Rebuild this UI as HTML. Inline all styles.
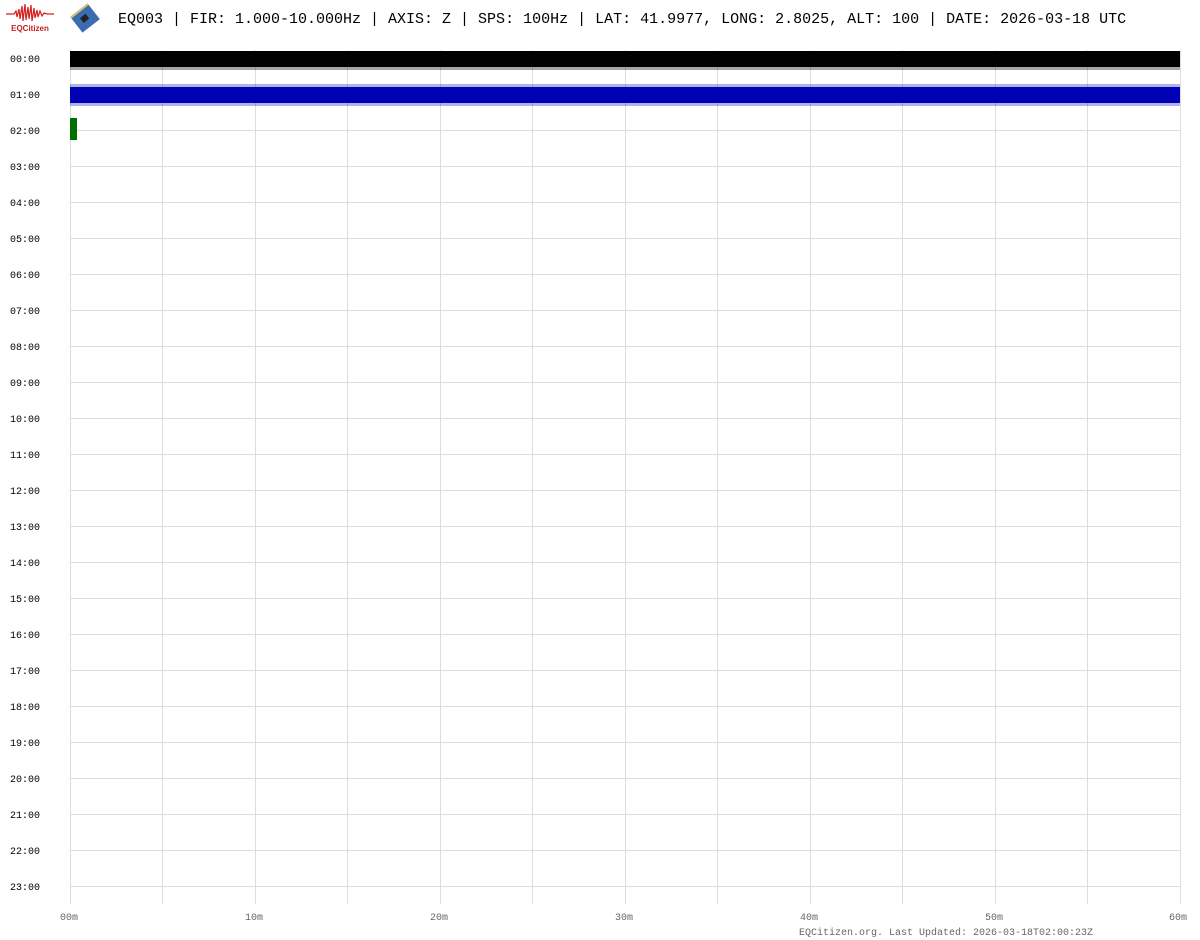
<!DOCTYPE html>
<html><head><meta charset="utf-8"><style>
body{margin:0;width:1200px;height:940px;background:#fff;overflow:hidden;font-family:"Liberation Mono",monospace;}
svg{position:absolute;left:0;top:0}
</style></head><body>
<svg width="1200" height="940" xmlns="http://www.w3.org/2000/svg">
<g stroke="#ddd" stroke-width="1">
<line x1="70.5" y1="50" x2="70.5" y2="904"/><line x1="162.5" y1="50" x2="162.5" y2="904"/><line x1="255.5" y1="50" x2="255.5" y2="904"/><line x1="347.5" y1="50" x2="347.5" y2="904"/><line x1="440.5" y1="50" x2="440.5" y2="904"/><line x1="532.5" y1="50" x2="532.5" y2="904"/><line x1="625.5" y1="50" x2="625.5" y2="904"/><line x1="717.5" y1="50" x2="717.5" y2="904"/><line x1="810.5" y1="50" x2="810.5" y2="904"/><line x1="902.5" y1="50" x2="902.5" y2="904"/><line x1="995.5" y1="50" x2="995.5" y2="904"/><line x1="1087.5" y1="50" x2="1087.5" y2="904"/><line x1="1180.5" y1="50" x2="1180.5" y2="904"/>
</g>
<g stroke="#ddd" stroke-width="1">
<line x1="70" y1="58.5" x2="1180" y2="58.5"/><line x1="70" y1="94.5" x2="1180" y2="94.5"/><line x1="70" y1="130.5" x2="1180" y2="130.5"/><line x1="70" y1="166.5" x2="1180" y2="166.5"/><line x1="70" y1="202.5" x2="1180" y2="202.5"/><line x1="70" y1="238.5" x2="1180" y2="238.5"/><line x1="70" y1="274.5" x2="1180" y2="274.5"/><line x1="70" y1="310.5" x2="1180" y2="310.5"/><line x1="70" y1="346.5" x2="1180" y2="346.5"/><line x1="70" y1="382.5" x2="1180" y2="382.5"/><line x1="70" y1="418.5" x2="1180" y2="418.5"/><line x1="70" y1="454.5" x2="1180" y2="454.5"/><line x1="70" y1="490.5" x2="1180" y2="490.5"/><line x1="70" y1="526.5" x2="1180" y2="526.5"/><line x1="70" y1="562.5" x2="1180" y2="562.5"/><line x1="70" y1="598.5" x2="1180" y2="598.5"/><line x1="70" y1="634.5" x2="1180" y2="634.5"/><line x1="70" y1="670.5" x2="1180" y2="670.5"/><line x1="70" y1="706.5" x2="1180" y2="706.5"/><line x1="70" y1="742.5" x2="1180" y2="742.5"/><line x1="70" y1="778.5" x2="1180" y2="778.5"/><line x1="70" y1="814.5" x2="1180" y2="814.5"/><line x1="70" y1="850.5" x2="1180" y2="850.5"/><line x1="70" y1="886.5" x2="1180" y2="886.5"/>
</g>
<rect x="70" y="51" width="1110" height="16" fill="#000"/>
<rect x="70" y="67" width="1110" height="3" fill="#000" opacity="0.35"/>
<rect x="70" y="84" width="1110" height="3" fill="#0000b4" opacity="0.3"/>
<rect x="70" y="87" width="1110" height="16" fill="#0000b4"/>
<rect x="70" y="103" width="1110" height="3" fill="#0000b4" opacity="0.3"/>
<rect x="70" y="118" width="7" height="22" fill="#007000"/>
<g font-size="10" fill="#000">
<text x="10" y="62">00:00</text><text x="10" y="98">01:00</text><text x="10" y="134">02:00</text><text x="10" y="170">03:00</text><text x="10" y="206">04:00</text><text x="10" y="242">05:00</text><text x="10" y="278">06:00</text><text x="10" y="314">07:00</text><text x="10" y="350">08:00</text><text x="10" y="386">09:00</text><text x="10" y="422">10:00</text><text x="10" y="458">11:00</text><text x="10" y="494">12:00</text><text x="10" y="530">13:00</text><text x="10" y="566">14:00</text><text x="10" y="602">15:00</text><text x="10" y="638">16:00</text><text x="10" y="674">17:00</text><text x="10" y="710">18:00</text><text x="10" y="746">19:00</text><text x="10" y="782">20:00</text><text x="10" y="818">21:00</text><text x="10" y="854">22:00</text><text x="10" y="890">23:00</text>
</g>
<g font-size="10" fill="#666" text-anchor="middle">
<text x="69" y="920">00m</text><text x="254" y="920">10m</text><text x="439" y="920">20m</text><text x="624" y="920">30m</text><text x="809" y="920">40m</text><text x="994" y="920">50m</text><text x="1178" y="920">60m</text>
</g>
<text x="799" y="935" font-size="10" fill="#666">EQCitizen.org. Last Updated: 2026-03-18T02:00:23Z</text>
<text x="118" y="23" font-size="15" fill="#000">EQ003 | FIR: 1.000-10.000Hz | AXIS: Z | SPS: 100Hz | LAT: 41.9977, LONG: 2.8025, ALT: 100 | DATE: 2026-03-18 UTC</text>
<polyline points="6,14 14,14 16,11 17,17 19,9 20,19 22,6 23,21 25,4 26,20 28,7 29,19 31,5 32,21 34,8 35,18 37,10 38,17 40,11 42,16 44,13 47,14 54,14" fill="none" stroke="#d42020" stroke-width="1.2"/>
<text x="30" y="31" font-family="Liberation Sans,sans-serif" font-size="8" font-weight="bold" fill="#c82020" text-anchor="middle">EQCitizen</text>
<g transform="translate(85,18) rotate(-38)">
<rect x="-11" y="-10" width="22" height="20" fill="#3a6db0"/>
<rect x="-4" y="-3" width="7" height="6" fill="#222"/>
<rect x="-11" y="-10" width="22" height="2" fill="#d8c070"/>
</g>
</svg>
</body></html>
